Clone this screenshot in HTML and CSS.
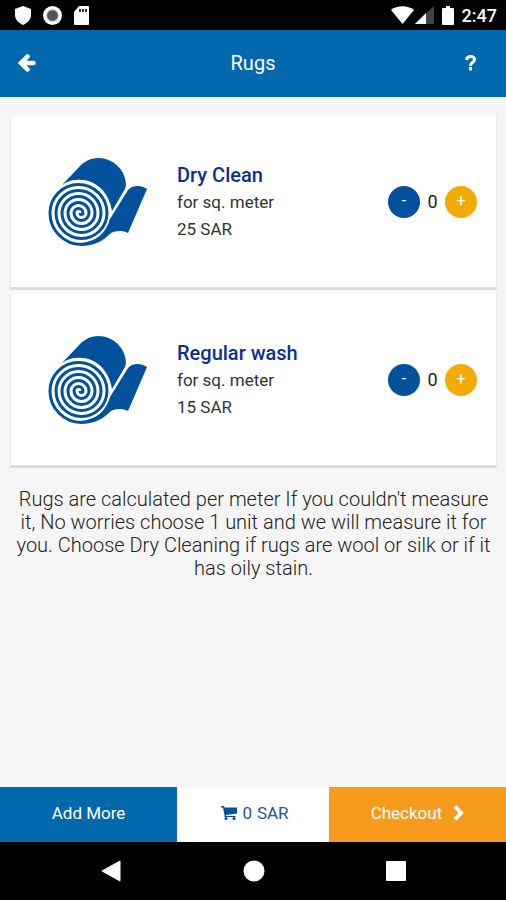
FILE: index.html
```html
<!DOCTYPE html>
<html lang="en">
<head>
  <meta charset="UTF-8" />
  <meta name="viewport" content="width=device-width, initial-scale=1.0"/>
  <title>Rugs</title>
  <link rel="stylesheet" href="styles.css">
</head>
<body>

  <!-- Shared drawings -->
  <svg class="symbols" aria-hidden="true">
    <symbol id="rug" viewBox="0 0 100 90">
      <path d="M14 28 L34 7 C39 3 44 1 50 1 C66 1 78 14 78 28 L77 32 L64 54 C61 34 46 21 28 23 C23 23 18 25 14 28 Z" fill="#03509d"/>
      <path d="M84 30 C89 28 95 29 99 32 L80 76 C74 73 67 74 63 76 C55 84 46 89 33 89 L32 86 C48 85 58 76 62 62 L80 33 Q82 31 84 30 Z" fill="#03509d"/>
      <path d="M32 56 a1.5 1.5 0 0 0 3 0 a4.5 4.5 0 0 0 -9 0 a7.5 7.5 0 0 0 15 0 a10.5 10.5 0 0 0 -21 0 a13.5 13.5 0 0 0 27 0 a16.5 16.5 0 0 0 -33 0 a19.5 19.5 0 0 0 39 0 a22.5 22.5 0 0 0 -45 0 a25.5 25.5 0 0 0 51 0 a28.5 28.5 0 0 0 -57 0 a31.5 31.5 0 0 0 31.5 31.5" fill="none" stroke="#03509d" stroke-width="3"/>
    </symbol>
  </svg>

  <div class="status-bar">
    <div class="status-icons">
      <svg class="icon-shield" viewBox="0 0 16 19"><path d="M8 0 L16 3 V9 C16 14 12 17 8 19 C4 17 0 14 0 9 V3 Z" fill="#fff"/></svg>
      <svg class="icon-record" viewBox="0 0 19 19"><circle cx="9.5" cy="9.5" r="9.5" fill="#fff"/><circle cx="9.5" cy="9.5" r="5.5" fill="#555" stroke="#888"/></svg>
      <svg class="icon-card" viewBox="0 0 15 19"><path d="M5 0 H14 Q15 0 15 1 V18 Q15 19 14 19 H1 Q0 19 0 18 V6 Z" fill="#fff"/><path d="M5 3 H7 V6 H5 Z M8 3 H10 V6 H8 Z M11 3 H13 V6 H11 Z" fill="#333"/></svg>
    </div>
    <div class="status-right">
      <svg class="icon-wifi" viewBox="0 0 23 18"><path d="M0 4 C6 -1 17 -1 23 4 L11.5 18 Z" fill="#fff"/></svg>
      <svg class="icon-signal" viewBox="0 0 19 18"><path d="M0 18 L19 0 V18 Z" fill="#444"/><path d="M0 18 L11 7 V18 Z" fill="#fff"/></svg>
      <svg class="icon-battery" viewBox="0 0 12 19"><path d="M4 0 H8 V2 H11 Q12 2 12 3 V18 Q12 19 11 19 H1 Q0 19 0 18 V3 Q0 2 1 2 H4 Z" fill="#fff"/></svg>
      <span class="time">2:47</span>
    </div>
  </div>

  <header class="header">
    <button class="header-btn" aria-label="Back">
      <svg class="icon-back" viewBox="0 0 18 18"><path d="M9.5 2.500 L3 9 L9.500 15.500 M4 9 H15.500" fill="none" stroke="#fff" stroke-width="4.500" stroke-linecap="round"/></svg>
    </button>
    <h1>Rugs</h1>
    <button class="header-btn help" aria-label="Help">
      <svg class="icon-help" viewBox="0 0 11 16"><path d="M1.500 5 C2 0.500 9.500 0.500 9.500 4.500 C9.500 7.500 5.500 7 5.500 11" fill="none" stroke="#fff" stroke-width="3"/><path d="M4 12 H7 V15.500 H4 Z" fill="#fff"/></svg>
    </button>
  </header>

  <main class="content">
    <div class="card">
      <svg class="rug" role="img" aria-label="Rug"><use href="#rug"/></svg>
      <div class="info">
        <h2>Dry Clean</h2>
        <p>for sq. meter</p>
        <p>25 SAR</p>
      </div>
      <div class="counter">
        <button class="minus" aria-label="Remove one Dry Clean">-</button>
        <span>0</span>
        <button class="plus" aria-label="Add one Dry Clean">+</button>
      </div>
    </div>

    <div class="card">
      <svg class="rug" role="img" aria-label="Rug"><use href="#rug"/></svg>
      <div class="info">
        <h2>Regular wash</h2>
        <p>for sq. meter</p>
        <p>15 SAR</p>
      </div>
      <div class="counter">
        <button class="minus" aria-label="Remove one Regular wash">-</button>
        <span>0</span>
        <button class="plus" aria-label="Add one Regular wash">+</button>
      </div>
    </div>

    <p class="note">Rugs are calculated per meter If you couldn't measure it, No worries choose 1 unit and we will measure it for you. Choose Dry Cleaning if rugs are wool or silk or if it has oily stain.</p>
  </main>

  <footer class="actions">
    <button class="add-more">Add More</button>
    <div class="total">
      <svg class="icon-cart" viewBox="0 0 16 14"><path d="M0 0 H3 L3.500 1.500 H16 V7.500 L5 9 V10 H14.500 V11 H3.500 V9 L2 1.500 H0 Z" fill="#03509d"/><circle cx="5" cy="12.500" r="1.500" fill="#03509d"/><circle cx="13" cy="12.500" r="1.500" fill="#03509d"/></svg>
      <span>0</span>
      <span>SAR</span>
    </div>
    <button class="checkout">
      Checkout
      <svg class="icon-next" viewBox="0 0 11 16"><path d="M2 1.500 L8 8 L2 14.500" fill="none" stroke="#fff" stroke-width="4"/></svg>
    </button>
  </footer>

  <nav class="nav-bar">
    <button aria-label="Back"><svg viewBox="0 0 22 22"><path d="M20 1 V21 L2 11 Z" fill="#fff" stroke="#fff" stroke-linejoin="round"/></svg></button>
    <button aria-label="Home"><svg viewBox="0 0 22 22"><circle cx="11" cy="11" r="10.500" fill="#fff"/></svg></button>
    <button aria-label="Recent apps"><svg viewBox="0 0 22 22"><rect x="1" y="1" width="20" height="20" rx="1" fill="#fff"/></svg></button>
  </nav>

</body>
</html>
```

FILE: styles.css
```css
* {
  box-sizing: border-box;
}

body {
  font-family: Roboto, sans-serif;
  background: #f5f5f5;
  color: #222;
  margin: 0;
  min-height: 100vh;
  display: flex;
  flex-direction: column;
}

h1, h2, p {
  margin: 0;
}

button {
  font-family: inherit;
  border: none;
  padding: 0;
  color: white;
  cursor: pointer;
}

svg {
  display: block;
}

.symbols {
  display: none;
}

/* Status bar */
.status-bar {
  display: flex;
  justify-content: space-between;
  align-items: center;
  height: 30px;
  padding: 0 9px 0 15px;
  background: black;
  color: white;
}

.status-icons {
  display: flex;
  align-items: center;
  gap: 12px;
}

.status-right {
  display: flex;
  align-items: center;
}

.icon-shield {
  width: 16px;
  height: 19px;
}

.icon-record {
  width: 19px;
  height: 19px;
}

.icon-card {
  width: 15px;
  height: 19px;
}

.icon-wifi {
  width: 23px;
  height: 18px;
}

.icon-signal {
  width: 19px;
  height: 18px;
  margin: 0 8px 0 1px;
}

.icon-battery {
  width: 12px;
  height: 19px;
  margin-right: 8px;
}

.time {
  font-size: 18px;
  font-weight: 500;
}

/* Header */
.header {
  display: flex;
  justify-content: space-between;
  align-items: center;
  height: 67px;
  padding: 0 18px 2px;
  background: #0168ae;
  color: white;
}

.header h1 {
  font-size: 20px;
  font-weight: 400;
}

.header-btn {
  display: flex;
  align-items: center;
  width: 36px;
  height: 36px;
  background: none;
}

.help {
  justify-content: center;
}

.icon-back {
  width: 18px;
  height: 18px;
}

.icon-help {
  width: 11px;
  height: 16px;
}

/* Items */
.content {
  flex: 1;
  padding: 18px 9px 18px 10px;
}

.card {
  display: flex;
  align-items: center;
  height: 175px;
  margin-bottom: 3px;
  padding: 0 19px 0 37px;
  background: white;
  border: 1px solid #ebeced;
  border-top-color: #f8f8f8;
  border-bottom: 3px solid #d9dddf;
}

.rug {
  width: 100px;
  height: 90px;
}

.info {
  flex: 1;
  margin-left: 29px;
  font-size: 17px;
  line-height: 27px;
  color: #333;
}

.info h2 {
  font-size: 20px;
  font-weight: 500;
  line-height: 28px;
  color: #0a2f92;
}

.counter {
  display: flex;
  align-items: center;
  font-size: 18px;
}

.counter span {
  width: 25px;
  text-align: center;
}

.counter button {
  width: 32px;
  height: 32px;
  padding-bottom: 3px;
  border-radius: 50%;
  font-size: 16px;
}

.minus {
  background: #03509d;
}

.plus {
  background: #f3aa05;
}

.note {
  margin-top: 20px;
  font-size: 20px;
  font-weight: 300;
  line-height: 23px;
  text-align: center;
}

/* Bottom actions */
.actions {
  display: grid;
  grid-template-columns: 35fr 30fr 35fr;
  height: 55px;
  font-size: 17px;
}

.actions > * {
  padding-bottom: 3px;
}

.actions button {
  font-size: 17px;
}

.add-more {
  background: #0168ae;
}

.total {
  display: flex;
  justify-content: center;
  align-items: center;
  gap: 5px;
  padding-left: 4px;
  background: white;
  color: #1d5794;
}

.checkout {
  display: flex;
  justify-content: center;
  align-items: center;
  gap: 11px;
  background: #f79b1e;
}

.icon-cart {
  width: 16px;
  height: 14px;
}

.icon-next {
  width: 11px;
  height: 16px;
}

/* System navigation */
.nav-bar {
  display: flex;
  justify-content: space-between;
  align-items: center;
  height: 58px;
  padding: 0 99px 0 100px;
  background: black;
}

.nav-bar button {
  background: none;
}

.nav-bar svg {
  width: 22px;
  height: 22px;
}
```
